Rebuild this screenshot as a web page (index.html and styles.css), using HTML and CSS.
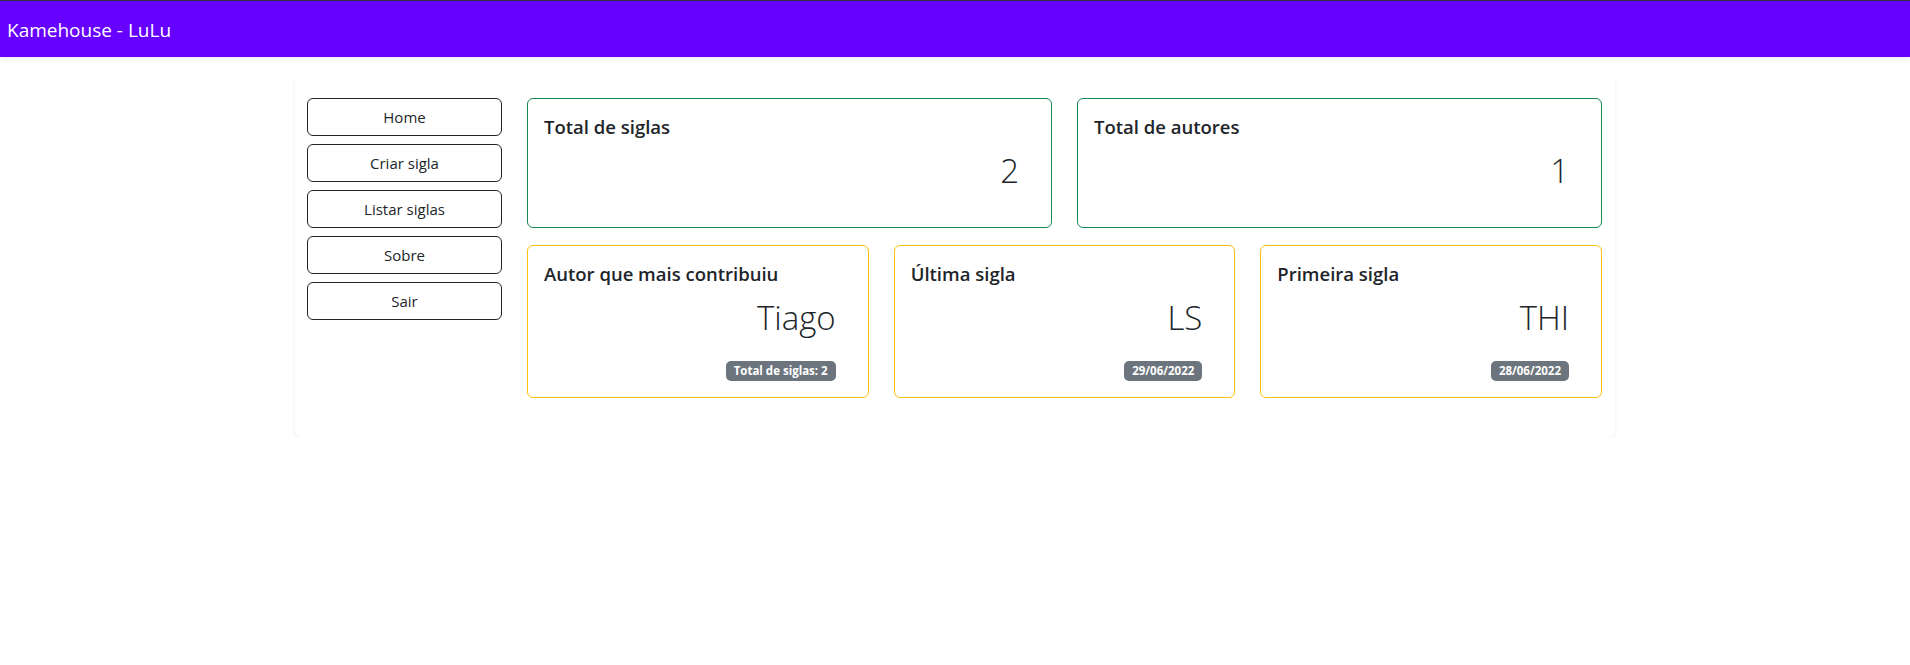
FILE: index.html
```html
<!DOCTYPE html>
<html lang="pt-BR">
<head>
<meta charset="utf-8">
<title>Kamehouse - LuLu</title>
<link rel="stylesheet" href="styles.css">
</head>
<body>
<nav class="topbar"><span class="brand">Kamehouse - LuLu</span></nav>
<main class="page">
  <section class="panel">
    <aside class="side">
      <a class="btn">Home</a>
      <a class="btn">Criar sigla</a>
      <a class="btn">Listar siglas</a>
      <a class="btn">Sobre</a>
      <a class="btn">Sair</a>
    </aside>
    <div class="content">
      <div class="row row-2">
        <div class="stat stat-green">
          <h5 class="stat-title">Total de siglas</h5>
          <p class="stat-value">2</p>
        </div>
        <div class="stat stat-green">
          <h5 class="stat-title">Total de autores</h5>
          <p class="stat-value">1</p>
        </div>
      </div>
      <div class="row row-3">
        <div class="stat stat-yellow">
          <h5 class="stat-title">Autor que mais contribuiu</h5>
          <p class="stat-value">Tiago</p>
          <div class="stat-foot"><span class="badge">Total de siglas: 2</span></div>
        </div>
        <div class="stat stat-yellow">
          <h5 class="stat-title">Última sigla</h5>
          <p class="stat-value">LS</p>
          <div class="stat-foot"><span class="badge">29/06/2022</span></div>
        </div>
        <div class="stat stat-yellow">
          <h5 class="stat-title">Primeira sigla</h5>
          <p class="stat-value">THI</p>
          <div class="stat-foot"><span class="badge">28/06/2022</span></div>
        </div>
      </div>
    </div>
  </section>
</main>
</body>
</html>
```
FILE: styles.css
```css
* { box-sizing: border-box; }
html, body { margin: 0; padding: 0; background: #fff; }
body {
  font-family: "Open Sans", "Noto Sans", sans-serif;
  color: #212529;
}
.topbar {
  height: 57px;
  border-top: 1px solid #333;
  background: #6600ff;
  color: #fff;
  display: flex;
  align-items: center;
  padding-left: 7px;
  box-shadow: 0 2px 6px rgba(0, 0, 0, 0.08);
  position: relative;
  z-index: 1;
}
.brand {
  font-size: 19px;
  line-height: 24px;
  margin-top: 2px;
}
.page {
  padding-top: 17px;
}
.panel {
  width: 1320px;
  margin: 0 auto;
  border-radius: 6px;
  background: #fff;
  box-shadow: 0 2px 4px rgba(0, 0, 0, 0.075);
  padding: 24px 13px 39px 12px;
  display: grid;
  grid-template-columns: 195px 1fr;
  column-gap: 25px;
  align-items: start;
}
.side {
  display: flex;
  flex-direction: column;
  gap: 8px;
}
.btn {
  display: flex;
  align-items: center;
  justify-content: center;
  height: 38px;
  border: 1px solid #212529;
  border-radius: 6px;
  font-size: 15px;
  color: #212529;
  background: #fff;
}
.content {
  display: flex;
  flex-direction: column;
  gap: 17px;
}
.row { display: grid; column-gap: 25px; }
.row-2 { grid-template-columns: 1fr 1fr; }
.row-3 { grid-template-columns: 1fr 1fr 1fr; }
.stat {
  border: 1px solid #198754;
  border-radius: 6px;
  padding: 16px;
  background: #fff;
}
.stat-green { border-color: #198754; }
.stat-yellow { border-color: #ffc107; }
.stat-title {
  margin: 0 0 8px 0;
  font-size: 18.5px;
  font-weight: 600;
  line-height: 24px;
}
.stat-value {
  margin: 0 0 20px 0;
  padding: 3px 16px 0 0;
  text-align: right;
  font-size: 33px;
  font-weight: 300;
  line-height: 41px;
}
.stat-foot {
  text-align: right;
  padding: 3px 16px 0 0;
  height: 23px;
}
.badge {
  display: inline-block;
  height: 20px;
  line-height: 20px;
  padding: 0 8px;
  border-radius: 5px;
  background: #6c757d;
  color: #fff;
  font-size: 11.5px;
  font-weight: 700;
  vertical-align: top;
}
```
